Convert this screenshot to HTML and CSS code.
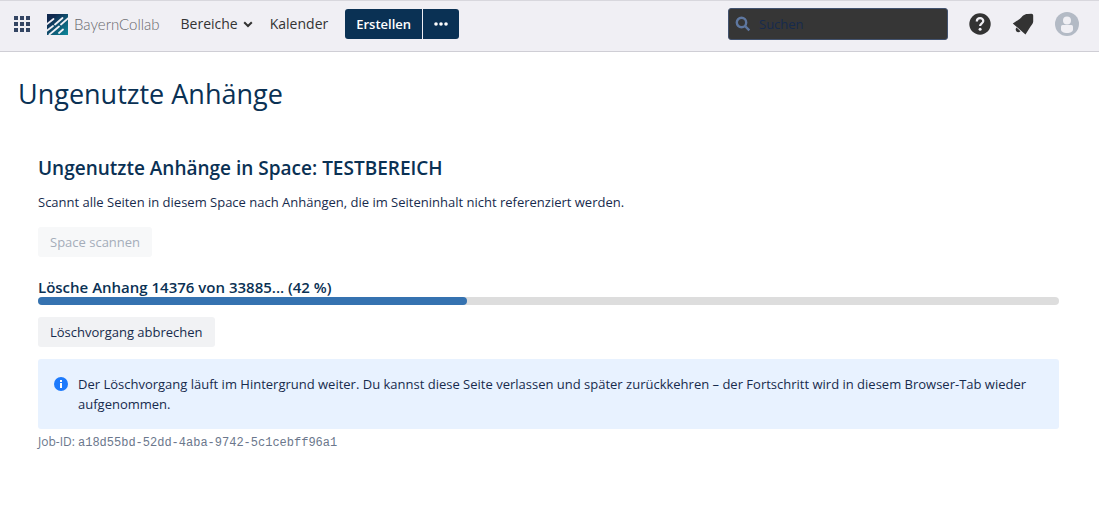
FILE: index.html
```html
<!DOCTYPE html>
<html lang="de">
<head>
<meta charset="utf-8">
<title>Ungenutzte Anhänge – BayernCollab</title>
<meta name="viewport" content="width=device-width, initial-scale=1">
<link rel="stylesheet" href="styles.css">
</head>
<body>
<header class="header">
  <button class="icon-button" type="button" aria-label="Anwendungen">
    <svg class="icon-apps" viewBox="0 0 16 16" width="16" height="16" aria-hidden="true">
      <path d="M0 0h4v4H0zM6 0h4v4H6zM12 0h4v4h-4zM0 6h4v4H0zM6 6h4v4H6zM12 6h4v4h-4zM0 12h4v4H0zM6 12h4v4H6zM12 12h4v4h-4z"/>
    </svg>
  </button>
  <a class="brand" href="#">
    <svg class="brand-mark" viewBox="0 0 21 21" width="21" height="21" aria-hidden="true">
      <defs>
        <linearGradient id="mark" x1="0" y1="0" x2="1" y2="1">
          <stop offset="0.2" stop-color="#10294f"/>
          <stop offset="1" stop-color="#0c8a9c"/>
        </linearGradient>
        <clipPath id="mark-clip"><path d="M0 0h21v21H0z"/></clipPath>
      </defs>
      <path fill="url(#mark)" d="M0 0h21v21H0z"/>
      <g class="brand-stripes" clip-path="url(#mark-clip)">
        <path d="M-1 11 6.500 5M-1 17.500 6 12M8 10.500 15.500 4M2.500 20.500 12 12.500M14 10.500 22 3.500M12 19 16 15.500"/>
      </g>
    </svg>
    <span class="brand-name">BayernCollab</span>
  </a>
  <nav class="nav">
    <a class="nav-link" href="#">Bereiche
      <svg class="icon-chevron" viewBox="0 0 10 7" width="10" height="7" aria-hidden="true"><path d="M1.200 1.200l3.800 3.800 3.800-3.800"/></svg>
    </a>
    <a class="nav-link" href="#">Kalender</a>
    <div class="create">
      <button class="create-button" type="button">Erstellen</button>
      <button class="create-button create-more" type="button" aria-label="Mehr">
        <svg viewBox="0 0 14 4" width="14" height="4" aria-hidden="true"><circle cx="2" cy="2" r="1.800"/><circle cx="7" cy="2" r="1.800"/><circle cx="12" cy="2" r="1.800"/></svg>
      </button>
    </div>
  </nav>
  <div class="tools">
    <label class="search">
      <svg class="icon-search" viewBox="0 0 16 16" width="16" height="16" aria-hidden="true"><circle cx="6.500" cy="6.500" r="4.700"/><path d="M10 10l4.300 4.300"/></svg>
      <input class="search-input" type="search" placeholder="Suchen" aria-label="Suchen">
    </label>
    <button class="icon-button" type="button" aria-label="Hilfe">
      <svg viewBox="0 0 22 22" width="22" height="22" aria-hidden="true">
        <circle class="icon-dark" cx="11" cy="11" r="10.700"/>
        <path class="help-mark" d="M7.800 8.600c0-2.200 1.400-3.400 3.300-3.400s3.200 1.200 3.200 2.900c0 2.300-3.200 2.400-3.200 5"/>
        <circle class="help-dot" cx="11.100" cy="16.200" r="1.500"/>
      </svg>
    </button>
    <button class="icon-button" type="button" aria-label="Benachrichtigungen">
      <svg class="icon-dark" viewBox="0 0 22 22" width="22" height="22" aria-hidden="true">
        <path d="M19.500.7q1.700 0 1.700 1.700V8.500c-.2 2-1.500 3.500-3 5.500L13.500 21.500.8 10.500 8 5.800C10 3.500 12 .9 15.500.9z"/>
        <path d="M4.500 14.500l4 3.800c-1.300 1.200-3 1.200-4 .2s-1.100-2.700 0-4z"/>
      </svg>
    </button>
    <button class="icon-button" type="button" aria-label="Profil">
      <svg viewBox="0 0 24 24" width="24" height="24" aria-hidden="true">
        <circle class="avatar-back" cx="12" cy="12" r="12"/>
        <circle class="avatar-figure" cx="12" cy="8.500" r="4"/>
        <path class="avatar-figure" d="M6 14.500q0-1.500 1.500-1.500h9q1.500 0 1.500 1.500v3c0 2.300-2.500 3.500-6 3.500s-6-1.200-6-3.500z"/>
      </svg>
    </button>
  </div>
</header>
<main class="page">
  <h1 class="page-title">Ungenutzte Anhänge</h1>
  <section class="panel">
    <h2 class="panel-title">Ungenutzte Anhänge in Space: TESTBEREICH</h2>
    <p class="panel-text">Scannt alle Seiten in diesem Space nach Anhängen, die im Seiteninhalt nicht referenziert werden.</p>
    <button class="button" type="button" disabled>Space scannen</button>
    <h3 class="progress-title" id="progress-title">Lösche Anhang 14376 von 33885... (42 %)</h3>
    <div class="progress" role="progressbar" aria-labelledby="progress-title" aria-valuenow="42" aria-valuemin="0" aria-valuemax="100">
      <div class="progress-value" style="width: 42%"></div>
    </div>
    <button class="button" type="button">Löschvorgang abbrechen</button>
    <div class="notice">
      <svg class="notice-icon" viewBox="0 0 14 14" width="14" height="14" aria-hidden="true">
        <circle class="notice-disc" cx="7" cy="7" r="7"/>
        <path class="notice-mark" d="M6 6h2v5H6zM6 3h2v2H6z"/>
      </svg>
      <p class="notice-text">Der Löschvorgang läuft im Hintergrund weiter. Du kannst diese Seite verlassen und später zurückkehren – der Fortschritt wird in diesem Browser-Tab wieder aufgenommen.</p>
    </div>
    <p class="job">Job-ID: <code class="job-id">a18d55bd-52dd-4aba-9742-5c1cebff96a1</code></p>
  </section>
</main>
</body>
</html>
```
FILE: styles.css
```css
* {
  box-sizing: border-box;
}

body {
  margin: 0;
  background: #fff;
  color: #172b4d;
  font: 13px/20px "Open Sans", "Noto Sans", sans-serif;
}

h1, h2, h3, p {
  margin: 0;
}

button, input {
  font: inherit;
}

svg {
  display: block;
}

.header {
  display: flex;
  align-items: center;
  height: 52px;
  padding: 0 20px 4px 14px;
  background: #f0eff4;
  border-top: 1px solid #d8d7dd;
  border-bottom: 1px solid #cfced5;
}

.icon-button {
  display: flex;
  padding: 0;
  border: 0;
  background: none;
}

.icon-apps {
  fill: #344563;
}

.brand {
  display: flex;
  align-items: center;
  gap: 6px;
  margin-left: 17px;
  color: #68686d;
  text-decoration: none;
}

.brand-stripes {
  fill: none;
  stroke: #f0eff4;
  stroke-width: 1.8;
  stroke-linecap: round;
}

.brand-name {
  font: 300 15px/20px Lato, sans-serif;
}

.nav {
  display: flex;
  align-items: center;
  gap: 17px;
  margin-left: 21px;
}

.nav-link {
  display: flex;
  align-items: center;
  gap: 5px;
  color: #333;
  font-size: 14px;
  text-decoration: none;
}

.icon-chevron {
  fill: none;
  stroke: #333;
  stroke-width: 2;
}

.create {
  display: flex;
  gap: 1px;
}

.create-button {
  height: 30px;
  padding: 0 11px;
  border: 0;
  border-radius: 3px 0 0 3px;
  background: #0a3154;
  color: #fff;
  font-weight: 600;
}

.create-more {
  border-radius: 0 3px 3px 0;
  fill: #fff;
}

.tools {
  display: flex;
  align-items: center;
  gap: 21px;
  margin-left: auto;
}

.search {
  display: flex;
  align-items: center;
  gap: 8px;
  width: 220px;
  height: 32px;
  padding: 0 6px;
  border: 1px solid #42526e;
  border-radius: 3px;
  background: #363636;
}

.icon-search {
  fill: none;
  stroke: #5e77a0;
  stroke-width: 2.4;
}

.search-input {
  flex: 1;
  min-width: 0;
  padding: 0;
  border: 0;
  outline: 0;
  background: none;
  color: #fff;
}

.search-input::placeholder {
  color: #172b4d;
  opacity: 1;
}

.icon-dark {
  fill: #333;
}

.help-mark {
  fill: none;
  stroke: #f0eff4;
  stroke-width: 2.2;
}

.help-dot {
  fill: #f0eff4;
}

.avatar-back {
  fill: #b3bac5;
}

.avatar-figure {
  fill: #f0eff4;
}

.page {
  padding: 24px 18px;
}

.page-title {
  color: #0a3154;
  font-size: 27px;
  font-weight: 400;
  line-height: 36px;
}

.panel {
  padding: 44px 22px 0 20px;
}

.panel-title {
  color: #0a3154;
  font-size: 19px;
  font-weight: 600;
  line-height: 24px;
}

.panel-text {
  margin: 12px 0 15px;
}

.button {
  display: block;
  height: 30px;
  padding: 0 12px;
  border: 0;
  border-radius: 3px;
  background: #f1f2f4;
  color: #172b4d;
}

.button:disabled {
  background: #f7f8f9;
  color: #a5adba;
}

.progress-title {
  margin-top: 20px;
  color: #0a3154;
  font-size: 15px;
  font-weight: 600;
  line-height: 20px;
}

.progress {
  height: 8px;
  margin-bottom: 12px;
  border-radius: 4px;
  background: #ddd;
}

.progress-value {
  height: 100%;
  border-radius: 4px;
  background: #3572b0;
}

.notice {
  display: flex;
  gap: 10px;
  margin-top: 12px;
  padding: 15px 16px;
  border-radius: 3px;
  background: #e8f2ff;
}

.notice-icon {
  flex: none;
  margin-top: 3px;
}

.notice-disc {
  fill: #1d7afc;
}

.notice-mark {
  fill: #fff;
}

.job {
  margin-top: 3px;
  color: #6b778c;
  font-size: 12px;
}

.job-id {
  font: 12px/20px "Liberation Mono", monospace;
}
```
